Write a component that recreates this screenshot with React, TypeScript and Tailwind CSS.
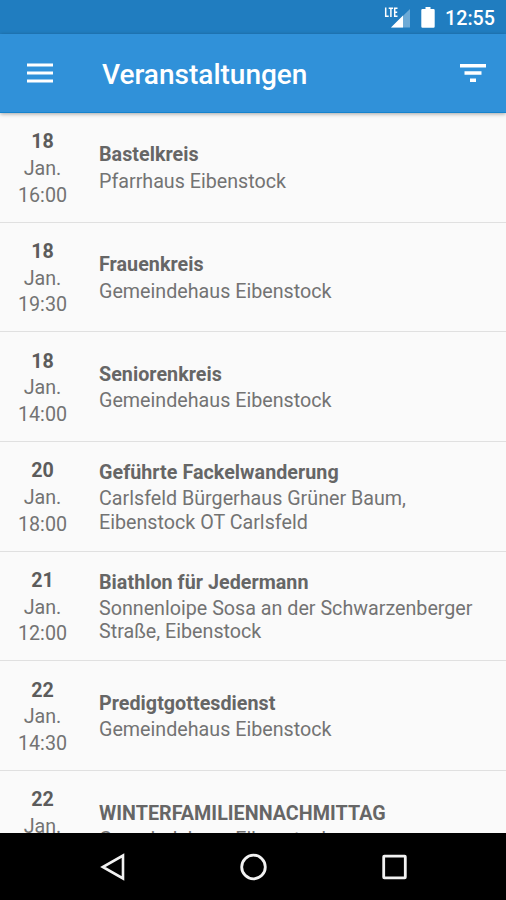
type Event = {
  day: string
  month: string
  time: string
  title: string
  place: string
}

const EVENTS: Event[] = [
  { day: '18', month: 'Jan.', time: '16:00', title: 'Bastelkreis', place: 'Pfarrhaus Eibenstock' },
  { day: '18', month: 'Jan.', time: '19:30', title: 'Frauenkreis', place: 'Gemeindehaus Eibenstock' },
  { day: '18', month: 'Jan.', time: '14:00', title: 'Seniorenkreis', place: 'Gemeindehaus Eibenstock' },
  {
    day: '20',
    month: 'Jan.',
    time: '18:00',
    title: 'Geführte Fackelwanderung',
    place: 'Carlsfeld Bürgerhaus Grüner Baum, Eibenstock OT Carlsfeld',
  },
  {
    day: '21',
    month: 'Jan.',
    time: '12:00',
    title: 'Biathlon für Jedermann',
    place: 'Sonnenloipe Sosa an der Schwarzenberger Straße, Eibenstock',
  },
  { day: '22', month: 'Jan.', time: '14:30', title: 'Predigtgottesdienst', place: 'Gemeindehaus Eibenstock' },
  { day: '22', month: 'Jan.', time: '', title: 'WINTERFAMILIENNACHMITTAG', place: 'Gemeindehaus Eibenstock' },
]

const StatusBar = () => (
  <div className="flex h-[34px] shrink-0 items-center justify-end bg-[#207dc0] pr-[11px] text-white">
    <svg width="27" height="22" viewBox="0 0 27 22" aria-hidden="true">
      <path d="M26 3V21.5H7Z" fill="#fff" fillOpacity="0.35" />
      <path d="M19 9.5V21.5H7Z" fill="#fff" />
      <path
        d="M1.7 1.5V10.3H4.7M4.7 2.2H9.1M6.9 2.2V11M13.5 2.2H10.7V10.3H13.5M10.7 6.2H13.2"
        fill="none"
        stroke="#fff"
        strokeWidth="1.5"
      />
    </svg>
    <svg className="ml-2.5" width="14" height="21" viewBox="0 0 14 21" aria-hidden="true">
      <path d="M4.5 0h5v2H12.5a1.2 1.2 0 0 1 1.2 1.2V19.6a1.2 1.2 0 0 1-1.2 1.2H1.5A1.2 1.2 0 0 1 .3 19.6V3.2A1.2 1.2 0 0 1 1.5 2h3z" fill="#fff" />
    </svg>
    <span className="ml-2.5 pt-[3px] text-[19.7px] leading-6 font-medium">12:55</span>
  </div>
)

const AppBar = () => (
  <header className="relative z-10 flex h-[79px] shrink-0 items-center border-b border-[#1683cd] bg-[#3091d9] pr-5 pl-[27px] text-white shadow-[0_1px_4px_rgba(0,0,0,0.35)]">
    <button type="button" aria-label="Menü">
      <svg width="26" height="20" viewBox="0 0 26 20" fill="#fff" aria-hidden="true">
        <path d="M0 0.5h26v3H0zM0 8.5h26v3H0zM0 16.5h26v3H0z" />
      </svg>
    </button>
    <h1 className="ml-[49px] flex-1 pt-1 text-[28px] leading-8 font-medium">Veranstaltungen</h1>
    <button type="button" aria-label="Filter">
      <svg width="26" height="18" viewBox="0 0 26 18" fill="#fff" aria-hidden="true">
        <path d="M0 0h26v3.5H0zM4.5 7.2h17v3.5h-17zM10 14.5h6v3.5h-6z" />
      </svg>
    </button>
  </header>
)

const EventRow = ({ day, month, time, title, place }: Event) => (
  <li className="flex h-[109.68px] shrink-0 border-b border-[#e0e0e0] text-[19.7px] text-[#737373]">
    <div className="w-[85px] shrink-0 pt-[16.4px] text-center leading-[26.6px]">
      <p className="font-bold text-[#5c5c5c]">{day}</p>
      <p>{month}</p>
      <p>{time}</p>
    </div>
    <div className="ml-3.5 flex-1 self-center pr-5">
      <p className="mb-[1.5px] leading-[27px] font-bold tracking-[0.04px] text-[#666]">{title}</p>
      <p className="leading-[23.2px]">{place}</p>
    </div>
  </li>
)

const NavigationBar = () => (
  <nav className="flex h-[67px] shrink-0 items-center justify-center gap-[114px] bg-black">
    <svg width="27" height="28" viewBox="0 0 27 28" fill="none" stroke="#f2f2f2" strokeWidth="2.6" aria-hidden="true">
      <path d="M24 2.6V25.4L3.8 14Z" />
    </svg>
    <svg width="27" height="28" viewBox="0 0 27 28" fill="none" stroke="#f2f2f2" strokeWidth="2.8" aria-hidden="true">
      <circle cx="13.5" cy="14" r="11.8" />
    </svg>
    <svg width="27" height="28" viewBox="0 0 27 28" fill="none" stroke="#f2f2f2" strokeWidth="2.8" aria-hidden="true">
      <rect x="2.7" y="3.2" width="21.6" height="21.6" rx="0.6" />
    </svg>
  </nav>
)

export default function App() {
  return (
    <div className="flex h-screen flex-col overflow-hidden bg-[#fafafa] font-['Roboto',sans-serif]">
      <StatusBar />
      <AppBar />
      <ul className="flex min-h-0 flex-1 flex-col overflow-hidden">
        {EVENTS.map((event, i) => (
          <EventRow key={i} {...event} />
        ))}
      </ul>
      <NavigationBar />
    </div>
  )
}
